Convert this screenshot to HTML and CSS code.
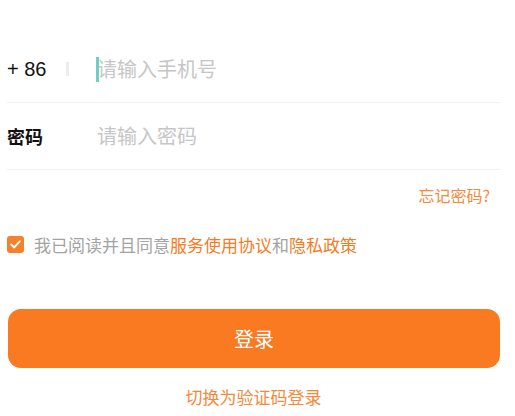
FILE: index.html
```html
<!DOCTYPE html>
<html lang="zh">
<head>
<meta charset="utf-8">
<link rel="stylesheet" href="styles.css">
</head>
<body>
<div class="page">
  <div class="row row-first">
    <span class="label num">+ 86</span>
    <span class="sep"></span>
    <span class="cursor"></span>
    <span class="placeholder">请输入手机号</span>
  </div>
  <div class="row">
    <span class="label bold">密码</span>
    <span class="placeholder">请输入密码</span>
  </div>
  <div class="forgot-wrap"><span class="forgot">忘记密码?</span></div>
  <div class="agree">
    <span class="checkbox">
      <svg width="11" height="9" viewBox="0 0 11 9"><path d="M1.2 4.6 L4.2 7.4 L9.8 1.4" fill="none" stroke="#fff" stroke-width="2" stroke-linecap="round" stroke-linejoin="round"/></svg>
    </span>
    <span class="agree-text">我已阅读并且同意<span class="link">服务使用协议</span>和<span class="link">隐私政策</span></span>
  </div>
  <button class="login">登录</button>
  <div class="switch">切换为验证码登录</div>
</div>
</body>
</html>
```
FILE: styles.css
```css
* { box-sizing: border-box; }
html, body { margin: 0; padding: 0; background: #fff; }
body { font-family: "Noto Sans CJK SC", "Liberation Sans", sans-serif; }
.page { padding: 36px 15px 0 7px; display: flex; flex-direction: column; }
.row {
  height: 67px;
  display: flex;
  align-items: center;
  border-bottom: 1px solid #f1f1f1;
}
.label { font-size: 18px; color: #111; width: 59px; }
.num { font-family: "Liberation Sans", Arial, sans-serif; font-size: 20px; color: #111; }
.bold { font-weight: 700; width: 90px; }
.sep { width: 3px; height: 14px; background: #ececec; margin-right: 27px; }
.cursor { width: 3px; height: 25px; background: #6fcfc0; margin-right: -2px; position: relative; z-index: 1; }
.placeholder { font-size: 20px; color: #c6c6c6; line-height: 1; }
.forgot-wrap { display: flex; justify-content: flex-end; padding: 15px 10px 0 0; height: 59px; }
.forgot { font-size: 16px; color: #f6893a; line-height: 20px; }
.agree { display: flex; align-items: center; gap: 10px; height: 30px; }
.checkbox {
  width: 17px; height: 17px; border-radius: 3px; background: #f7802a;
  display: flex; align-items: center; justify-content: center;
}
.agree-text { font-size: 17px; color: #a3a3a3; }
.link { color: #f47b24; }
.login {
  margin: 50px 0 0 1px;
  height: 59px;
  border: 0;
  border-radius: 13px;
  background: #f97a21;
  color: #fff;
  font-family: inherit;
  font-size: 20px;
  width: 492px;
}
.switch { text-align: center; font-size: 17px; color: #f6883a; margin-top: 17px; line-height: 24px; }
```
